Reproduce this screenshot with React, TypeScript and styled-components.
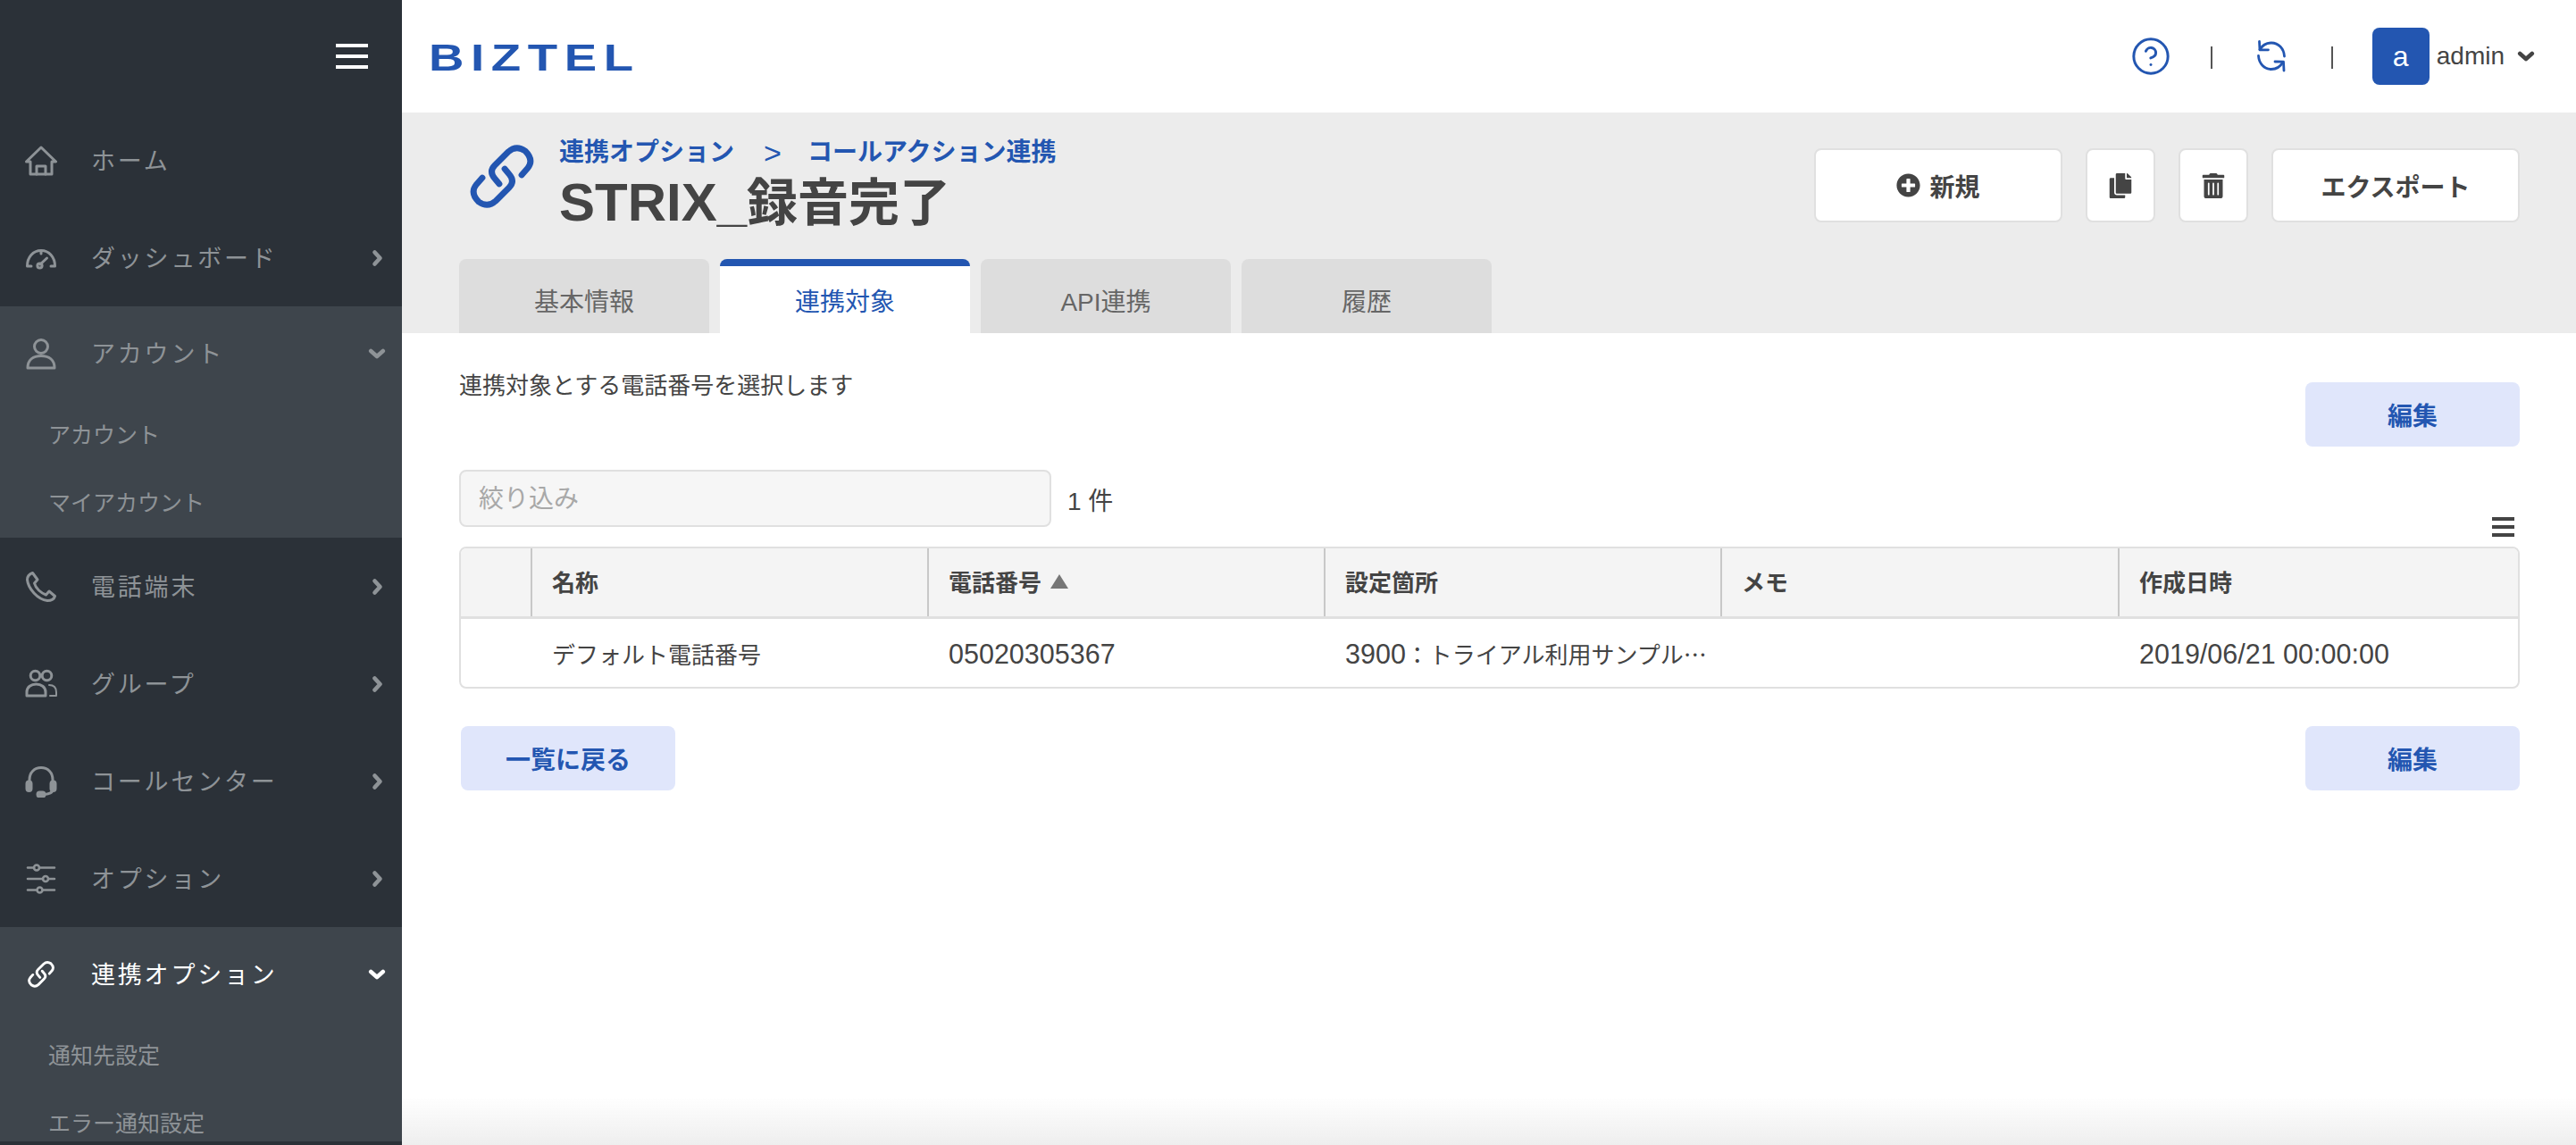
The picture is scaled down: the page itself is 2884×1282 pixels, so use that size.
import styled, { createGlobalStyle } from "styled-components";
import { FaCopy, FaPlusCircle, FaTrashAlt } from "react-icons/fa";
import { CircleHelp } from "lucide-react";
import type { ReactNode } from "react";

const BLUE = "#2356b1";
const TEXT = "#444444";
const MENU = "#8e9397";

const GlobalStyle = createGlobalStyle`
  html, body { margin: 0; padding: 0; height: 100%; background: #ffffff; }
  body {
    font-family: "Liberation Sans", "Noto Sans CJK JP", sans-serif;
    color: ${TEXT};
    overflow: hidden;
  }
  * { box-sizing: border-box; }
`;

function LinkIcon() {
  return (
    <svg viewBox="14 10 76 76" width="100%" height="100%" fill="none" stroke="currentColor" strokeWidth="6.8" strokeLinecap="round" strokeLinejoin="round">
      <path d="M49 56 L44 50 Q37 42 44 35 L59 20 Q68 12 78 19 Q88 29 81 38 L74 46" />
      <path d="M55 39 L60 45 Q67 53 60 60 L45 75 Q36 83 26 76 Q16 66 23 57 L30 49" />
    </svg>
  );
}

function SmallLinkIcon() {
  return (
    <SmallLink>
      <LinkIcon />
    </SmallLink>
  );
}

const menuSvg = { fill: "none", stroke: "currentColor", strokeWidth: 3, strokeLinecap: "round", strokeLinejoin: "round" } as const;

function HomeIcon() {
  return (
    <svg viewBox="0 0 36 36" width="36" height="36" {...menuSvg}>
      <path d="M1.5 19 L18 3 L34.5 19 H30 V33 H6 V19 Z" />
      <path d="M13 33 V24 H23 V33" />
    </svg>
  );
}

function GaugeIcon() {
  return (
    <svg viewBox="0 0 36 36" width="36" height="36" {...menuSvg}>
      <path d="M7 27 H2.5 C2.5 17 9 9.5 18 9.5 C27 9.5 33.5 17 33.5 27 H29" />
      <path d="M18 10 V13" />
      <path d="M17 25 L24.5 18" />
      <circle cx="16.5" cy="26.5" r="2.6" />
    </svg>
  );
}

function PersonIcon() {
  return (
    <svg viewBox="0 0 36 36" width="36" height="36" {...menuSvg}>
      <circle cx="18" cy="10" r="7.5" />
      <path d="M3 34 H33 C33 25 27 20.5 18 20.5 C9 20.5 3 25 3 34 Z" />
    </svg>
  );
}

function PhoneIcon() {
  return (
    <svg viewBox="0 0 36 36" width="36" height="36" {...menuSvg}>
      <path d="M8.5 2.5 L14 10 L10.5 14 C12 20 18 25 23.5 27 L27 23 L33.5 28.5 C32.5 32 28.5 33.5 25 33.5 C14 32 3.5 20 2.5 10 C2.5 7 4.5 4 8.5 2.5 Z" />
    </svg>
  );
}

function GroupIcon() {
  return (
    <svg viewBox="0 0 36 36" width="36" height="36" {...menuSvg}>
      <circle cx="11.5" cy="8.5" r="5.3" />
      <circle cx="24.5" cy="8.5" r="5.3" />
      <path d="M2 31 H23 V27 C23 21 18 18 12.5 18 C7 18 2 21 2 27 Z" />
      <path d="M27 19 C32 19 35 22 35 27 V31 H28" strokeWidth="2" />
    </svg>
  );
}

function HeadsetIcon() {
  return (
    <svg viewBox="0 0 36 36" width="36" height="36" {...menuSvg}>
      <path d="M5 19 V16 C5 8 10.5 2.5 18 2.5 C25.5 2.5 31 8 31 16 V19" />
      <rect x="2" y="18" width="5" height="10.5" rx="2.5" fill="currentColor" />
      <rect x="29" y="18" width="5" height="10.5" rx="2.5" fill="currentColor" />
      <path d="M31 28 C30 31 27 32 22 32.5" />
      <rect x="14" y="30" width="8" height="5" rx="2.5" fill="currentColor" />
    </svg>
  );
}

function SlidersIcon() {
  return (
    <svg viewBox="0 0 36 36" width="36" height="36" {...menuSvg} strokeWidth="2.6">
      <path d="M3 5.5 H10 M17 5.5 H33" />
      <circle cx="13" cy="5.5" r="3" />
      <path d="M3 18 H20 M27 18 H33" />
      <circle cx="23" cy="18" r="3" />
      <path d="M3 30.5 H13 M20 30.5 H33" />
      <circle cx="16.5" cy="30.5" r="3" />
    </svg>
  );
}

function SyncIcon() {
  return (
    <svg viewBox="0 0 32 36" width="32" height="36" fill="none" stroke="currentColor" strokeWidth="2.8" strokeLinecap="round" strokeLinejoin="round">
      <path d="M3 10.5 C6 5.5 11 3 16 3 C24 3 30 9.5 30.5 18" />
      <path d="M2.5 1.5 L3 10.8 L12.5 10.8" />
      <path d="M1.5 17.5 C2 26 8 32.5 16 32.5 C21 32.5 26 29.5 28.5 25" />
      <path d="M20 24 L29.5 24.2 L30 34" />
    </svg>
  );
}

function Chevron({ open }: { open?: boolean }) {
  return (
    <svg viewBox="0 0 20 20" width="20" height="20" fill="none" stroke="currentColor" strokeWidth="4.6" strokeLinecap="round" strokeLinejoin="round">
      <path d={open ? "M3.2 7 L10 13 L16.8 7" : "M7.5 3.5 L13.5 10 L7.5 16.5"} />
    </svg>
  );
}

interface MenuEntry {
  label: string;
  icon: ReactNode;
  arrow?: boolean;
  open?: boolean;
  active?: boolean;
  children?: string[];
}

const menu: MenuEntry[] = [
  { label: "ホーム", icon: <HomeIcon /> },
  { label: "ダッシュボード", icon: <GaugeIcon />, arrow: true },
  { label: "アカウント", icon: <PersonIcon />, arrow: true, open: true, children: ["アカウント", "マイアカウント"] },
  { label: "電話端末", icon: <PhoneIcon />, arrow: true },
  { label: "グループ", icon: <GroupIcon />, arrow: true },
  { label: "コールセンター", icon: <HeadsetIcon />, arrow: true },
  { label: "オプション", icon: <SlidersIcon />, arrow: true },
  {
    label: "連携オプション",
    icon: <SmallLinkIcon />,
    arrow: true,
    open: true,
    active: true,
    children: ["通知先設定", "エラー通知設定"],
  },
];

const tabs = ["基本情報", "連携対象", "API連携", "履歴"];

export default function App() {
  return (
    <>
      <GlobalStyle />
      <Layout>
        <Sidebar>
          <Burger>
            <BurgerLines>
              <i />
              <i />
              <i />
            </BurgerLines>
          </Burger>
          <Nav>
            {menu.map((item) => (
              <MenuGroup key={item.label} $open={!!item.open}>
                <MenuRow $open={!!item.open} $active={!!item.active}>
                  <MenuIcon>{item.icon}</MenuIcon>
                  <MenuLabel>{item.label}</MenuLabel>
                  {item.arrow && (
                    <MenuArrow>
                      <Chevron open={item.open} />
                    </MenuArrow>
                  )}
                </MenuRow>
                {item.children?.map((child) => (
                  <SubRow key={child}>{child}</SubRow>
                ))}
              </MenuGroup>
            ))}
          </Nav>
        </Sidebar>

        <Main>
          <TopBar>
            <Logo>BIZTEL</Logo>
            <TopTools>
              <HelpButton>
                <CircleHelp size={46} strokeWidth={1.55} />
              </HelpButton>
              <Separator />
              <SyncButton>
                <SyncIcon />
              </SyncButton>
              <Separator />
              <Avatar>a</Avatar>
              <UserName>admin</UserName>
              <UserCaret>
                <Chevron open />
              </UserCaret>
            </TopTools>
          </TopBar>

          <PageHeader>
            <TitleBar>
              <TitleGroup>
                <TitleIcon>
                  <LinkIcon />
                </TitleIcon>
                <div>
                  <Breadcrumb>
                    <span>連携オプション</span>
                    <BreadcrumbSep>&gt;</BreadcrumbSep>
                    <span>コールアクション連携</span>
                  </Breadcrumb>
                  <Title>
                    STRIX_<TitleKanji>録音完了</TitleKanji>
                  </Title>
                </div>
              </TitleGroup>
              <Actions>
                <ActionButton $wide>
                  <FaPlusCircle size={27} />
                  新規
                </ActionButton>
                <ActionButton>
                  <FaCopy size={28} />
                </ActionButton>
                <ActionButton>
                  <FaTrashAlt size={28} />
                </ActionButton>
                <ActionButton $wide>エクスポート</ActionButton>
              </Actions>
            </TitleBar>
            <Tabs>
              {tabs.map((tab) => (
                <Tab key={tab} $selected={tab === "連携対象"}>
                  {tab}
                </Tab>
              ))}
            </Tabs>
          </PageHeader>

          <Content>
            <IntroRow>
              <Intro>連携対象とする電話番号を選択します</Intro>
              <SoftButton>編集</SoftButton>
            </IntroRow>

            <FilterRow>
              <FilterInput placeholder="絞り込み" readOnly />
              <Count>1 件</Count>
              <ColumnMenu>
                <i />
                <i />
                <i />
              </ColumnMenu>
            </FilterRow>

            <TableFrame>
              <HeaderRow>
                <HeadCell />
                <HeadCell>名称</HeadCell>
                <HeadCell>
                  電話番号
                  <SortMark />
                </HeadCell>
                <HeadCell>設定箇所</HeadCell>
                <HeadCell>メモ</HeadCell>
                <HeadCell>作成日時</HeadCell>
              </HeaderRow>
              <BodyRow>
                <BodyCell />
                <BodyCell>デフォルト電話番号</BodyCell>
                <BodyCell>
                  <Digits>05020305367</Digits>
                </BodyCell>
                <BodyCell>
                  <Digits>3900</Digits>：トライアル利用サンプル拠点
                </BodyCell>
                <BodyCell />
                <BodyCell>
                  <Digits>2019/06/21 00:00:00</Digits>
                </BodyCell>
              </BodyRow>
            </TableFrame>

            <FooterRow>
              <SoftButton>一覧に戻る</SoftButton>
              <SoftButton>編集</SoftButton>
            </FooterRow>
          </Content>
        </Main>
      </Layout>
      <BottomFade />
    </>
  );
}

const Layout = styled.div`
  display: grid;
  grid-template-columns: 450px 1fr;
  height: 100vh;
  overflow: hidden;
`;

const Sidebar = styled.aside`
  background: #2b3138;
  height: 100vh;
  overflow: hidden;
  padding-bottom: 4px;
  display: flex;
  flex-direction: column;
`;

const Burger = styled.div`
  flex: none;
  height: 125px;
  display: flex;
  align-items: center;
  justify-content: flex-end;
  padding-right: 38px;
`;

const BurgerLines = styled.div`
  width: 36px;
  display: flex;
  flex-direction: column;
  gap: 8px;

  i {
    display: block;
    height: 4px;
    background: #ffffff;
  }
`;

const Nav = styled.nav`
  flex: 1;
  min-height: 0;
  overflow: hidden;
`;

const MenuGroup = styled.div<{ $open: boolean }>`
  background: ${(props) => (props.$open ? "#3e454c" : "transparent")};
  padding-bottom: ${(props) => (props.$open ? "2px" : "0")};
`;

const MenuRow = styled.div<{ $open: boolean; $active: boolean }>`
  height: ${(props) => (props.$open ? "106px" : "109px")};
  display: flex;
  align-items: center;
  padding: 0 18px 0 28px;
  color: ${(props) => (props.$active ? "#ffffff" : MENU)};
`;

const MenuIcon = styled.span`
  flex: none;
  width: 74px;
  display: flex;
  align-items: center;
`;

const SmallLink = styled.span`
  display: block;
  width: 32px;
  height: 32px;
  margin-left: 2px;
`;

const MenuLabel = styled.span`
  font-size: 27px;
  letter-spacing: 2.8px;
  line-height: 1;
  margin-top: 3px;
`;

const MenuArrow = styled.span`
  margin-left: auto;
  display: flex;
`;

const SubRow = styled.div`
  height: 75.5px;
  display: flex;
  align-items: center;
  padding: 0 0 3px 54px;
  font-size: 25px;
  color: ${MENU};
`;

const Main = styled.main`
  min-width: 0;
  display: flex;
  flex-direction: column;
`;

const TopBar = styled.header`
  flex: none;
  height: 126px;
  display: flex;
  align-items: center;
  justify-content: space-between;
  padding: 0 46px 0 30px;
`;

const Logo = styled.div`
  font-size: 43px;
  font-weight: 700;
  letter-spacing: 6px;
  line-height: 1;
  margin-top: 2px;
  color: ${BLUE};
  transform: scaleX(1.27);
  transform-origin: left center;
`;

const TopTools = styled.div`
  display: flex;
  align-items: center;
`;

const HelpButton = styled.span`
  display: flex;
  color: ${BLUE};
  margin-right: -3px;
`;

const SyncButton = styled.span`
  display: flex;
  color: ${BLUE};
  margin: 0 4px 0 3px;
`;

const Separator = styled.span`
  width: 2px;
  height: 25px;
  background: #555555;
  margin: 2px 47px 0;
`;

const Avatar = styled.span`
  width: 64px;
  height: 64px;
  margin-left: -3px;
  border-radius: 8px;
  background: ${BLUE};
  color: #ffffff;
  font-size: 32px;
  display: flex;
  align-items: center;
  justify-content: center;
`;

const UserName = styled.span`
  font-size: 28px;
  margin-left: 8px;
`;

const UserCaret = styled.span`
  display: flex;
  margin-left: 14px;
`;

const PageHeader = styled.section`
  flex: none;
  height: 247px;
  background: #ececec;
  padding: 0 63px 0 64px;
  display: flex;
  flex-direction: column;
`;

const TitleBar = styled.div`
  height: 164px;
  display: flex;
  justify-content: space-between;
  align-items: flex-start;
`;

const TitleGroup = styled.div`
  display: flex;
  padding-top: 27px;
`;

const TitleIcon = styled.span`
  width: 76px;
  height: 76px;
  margin: 7px 26px 0 10px;
  color: ${BLUE};
`;

const Breadcrumb = styled.div`
  font-size: 28px;
  font-weight: 700;
  line-height: 36px;
  color: ${BLUE};
  display: flex;
  align-items: center;
`;

const BreadcrumbSep = styled.span`
  margin: 0 29px 0 33px;
  font-size: 34px;
  font-weight: 400;
`;

const Title = styled.h1`
  margin: 3px 0 0;
  font-size: 60px;
  font-weight: 700;
  line-height: 70px;
  color: ${TEXT};
`;

const TitleKanji = styled.span`
  font-size: 57px;
`;

const Actions = styled.div`
  display: flex;
  gap: 26px;
  margin-top: 40px;
`;

const ActionButton = styled.button<{ $wide?: boolean }>`
  width: ${(props) => (props.$wide ? "278px" : "78px")};
  height: 83px;
  background: #ffffff;
  border: 2px solid #e0e0e0;
  border-radius: 8px;
  font: 700 28px "Liberation Sans", "Noto Sans CJK JP", sans-serif;
  color: ${TEXT};
  display: flex;
  align-items: center;
  justify-content: center;
  gap: 10px;
`;

const Tabs = styled.div`
  display: flex;
  gap: 12px;
`;

const Tab = styled.div<{ $selected: boolean }>`
  width: 280px;
  height: 83px;
  border-radius: 8px 8px 0 0;
  border-top: 8px solid ${(props) => (props.$selected ? BLUE : "transparent")};
  background: ${(props) => (props.$selected ? "#ffffff" : "#dddddd")};
  color: ${(props) => (props.$selected ? BLUE : "#666666")};
  font-size: 28px;
  display: flex;
  align-items: center;
  justify-content: center;
`;

const Content = styled.div`
  flex: 1;
  padding: 41px 63px 0 64px;
`;

const IntroRow = styled.div`
  display: flex;
  justify-content: space-between;
  align-items: flex-start;
`;

const Intro = styled.p`
  margin: 0;
  font-size: 26px;
  line-height: 36px;
`;

const SoftButton = styled.button`
  width: 240px;
  height: 72px;
  border: 0;
  border-radius: 8px;
  background: #e0e6fb;
  color: ${BLUE};
  font: 700 28px "Liberation Sans", "Noto Sans CJK JP", sans-serif;
  margin-top: 14px;
`;

const FilterRow = styled.div`
  height: 86px;
  margin-top: 26px;
  display: flex;
  align-items: flex-start;
`;

const FilterInput = styled.input`
  width: 663px;
  height: 64px;
  background: #f6f6f6;
  border: 2px solid #e0e0e0;
  border-radius: 8px;
  padding: 2px 20px 0;
  font: 28px "Liberation Sans", "Noto Sans CJK JP", sans-serif;
  outline: none;

  &::placeholder {
    color: #a8a8a8;
  }
`;

const Count = styled.span`
  margin: 18px 0 0 18px;
  font-size: 28px;
  line-height: 36px;
`;

const ColumnMenu = styled.div`
  margin: 53px 6px 0 auto;
  width: 25px;
  display: flex;
  flex-direction: column;
  gap: 5px;

  i {
    display: block;
    height: 4px;
    background: ${TEXT};
  }
`;

const TableFrame = styled.div`
  border: 2px solid #e0e0e0;
  border-radius: 8px;
  overflow: hidden;
`;

const columns = "78px 444px 444px 444px 445px 1fr";

const HeaderRow = styled.div`
  display: grid;
  grid-template-columns: ${columns};
  height: 79px;
  background: #f4f4f4;
  border-bottom: 3px solid #e0e0e0;
`;

const HeadCell = styled.div`
  display: flex;
  align-items: center;
  padding: 0 22px 3px;
  font-size: 26px;
  font-weight: 700;

  & + & {
    border-left: 2px solid #c8c8c8;
  }
`;

const SortMark = styled.span`
  margin-left: 10px;
  width: 0;
  height: 0;
  border-left: 10px solid transparent;
  border-right: 10px solid transparent;
  border-bottom: 16px solid #777777;
`;

const BodyRow = styled.div`
  display: grid;
  grid-template-columns: ${columns};
  height: 76px;
`;

const BodyCell = styled.div`
  min-width: 0;
  padding: 0 10px 0 24px;
  font-family: "Noto Sans CJK JP", sans-serif;
  font-size: 26px;
  line-height: 78px;
  white-space: nowrap;
  overflow: hidden;
  text-overflow: ellipsis;
`;

const Digits = styled.span`
  font-family: "Liberation Sans", sans-serif;
  font-size: 30.5px;
`;

const FooterRow = styled.div`
  display: flex;
  justify-content: space-between;
  padding-left: 2px;
  margin-top: 28px;
`;

const BottomFade = styled.div`
  position: fixed;
  left: 450px;
  right: 0;
  bottom: 0;
  height: 54px;
  background: linear-gradient(rgba(238, 238, 238, 0), #eeeeee);
  pointer-events: none;
`;
